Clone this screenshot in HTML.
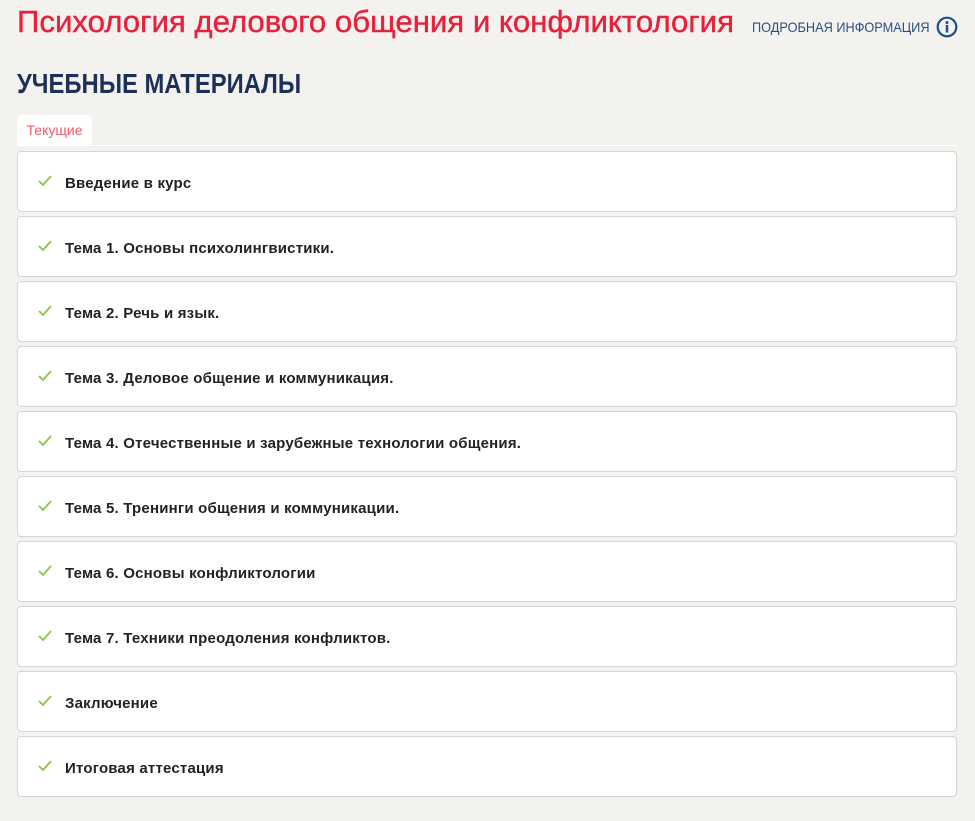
<!DOCTYPE html>
<html><head><meta charset="utf-8"><style>
body{margin:0;background:#f3f2ef;width:975px;height:821px;overflow:hidden;font-family:"Liberation Sans",sans-serif;}
.title{position:absolute;left:17px;top:4px;font-size:31px;color:#e8203c;white-space:nowrap;transform:scaleX(1.005);transform-origin:left;-webkit-text-stroke:0.4px #e8203c}
.info{position:absolute;left:752px;top:19px;font-size:14px;color:#2a5080;white-space:nowrap;transform:scaleX(0.91);transform-origin:left}
.icon{position:absolute;left:936px;top:16px}
.h2{position:absolute;left:17px;top:68px;font-weight:bold;font-size:28px;color:#1c3058;white-space:nowrap;transform:scaleX(0.85);transform-origin:left}
.tab{position:absolute;left:17px;top:115px;width:75px;height:31px;background:#fff;border-radius:4px 4px 0 0;color:#ef5a6a;font-size:14px;text-align:center;line-height:31px}
.line{position:absolute;left:17px;top:145px;width:940px;height:1px;background:#fff}
.item{position:absolute;left:17px;width:938px;height:59px;background:#fff;border:1px solid #d4d4d4;border-radius:4px;}
.item svg{position:absolute;left:20px;top:23px}
.item span{position:absolute;left:47px;top:23px;font-size:15px;color:#222;font-weight:bold;white-space:nowrap;letter-spacing:0.2px}
</style></head><body>
<div class="title">Психология делового общения и конфликтология</div>
<div class="info">ПОДРОБНАЯ ИНФОРМАЦИЯ</div>
<svg class="icon" width="22" height="22" viewBox="0 0 22 22"><circle cx="11" cy="11" r="9.3" fill="none" stroke="#1b4f8a" stroke-width="2.2"/><circle cx="11" cy="6.5" r="1.5" fill="#1b4f8a"/><rect x="9.8" y="9" width="2.4" height="7.5" fill="#1b4f8a"/></svg>
<div class="h2">УЧЕБНЫЕ МАТЕРИАЛЫ</div>
<div class="tab">Текущие</div>
<div class="line"></div>
<div class="item" style="top:151px"><svg width="14" height="11"><path d="M1 6l4 4 8-9" fill="none" stroke="#8cc63f" stroke-width="1.8"/></svg><span>Введение в курс</span></div>
<div class="item" style="top:216px"><svg width="14" height="11"><path d="M1 6l4 4 8-9" fill="none" stroke="#8cc63f" stroke-width="1.8"/></svg><span>Тема 1. Основы психолингвистики.</span></div>
<div class="item" style="top:281px"><svg width="14" height="11"><path d="M1 6l4 4 8-9" fill="none" stroke="#8cc63f" stroke-width="1.8"/></svg><span>Тема 2. Речь и язык.</span></div>
<div class="item" style="top:346px"><svg width="14" height="11"><path d="M1 6l4 4 8-9" fill="none" stroke="#8cc63f" stroke-width="1.8"/></svg><span>Тема 3. Деловое общение и коммуникация.</span></div>
<div class="item" style="top:411px"><svg width="14" height="11"><path d="M1 6l4 4 8-9" fill="none" stroke="#8cc63f" stroke-width="1.8"/></svg><span>Тема 4. Отечественные и зарубежные технологии общения.</span></div>
<div class="item" style="top:476px"><svg width="14" height="11"><path d="M1 6l4 4 8-9" fill="none" stroke="#8cc63f" stroke-width="1.8"/></svg><span>Тема 5. Тренинги общения и коммуникации.</span></div>
<div class="item" style="top:541px"><svg width="14" height="11"><path d="M1 6l4 4 8-9" fill="none" stroke="#8cc63f" stroke-width="1.8"/></svg><span>Тема 6. Основы конфликтологии</span></div>
<div class="item" style="top:606px"><svg width="14" height="11"><path d="M1 6l4 4 8-9" fill="none" stroke="#8cc63f" stroke-width="1.8"/></svg><span>Тема 7. Техники преодоления конфликтов.</span></div>
<div class="item" style="top:671px"><svg width="14" height="11"><path d="M1 6l4 4 8-9" fill="none" stroke="#8cc63f" stroke-width="1.8"/></svg><span>Заключение</span></div>
<div class="item" style="top:736px"><svg width="14" height="11"><path d="M1 6l4 4 8-9" fill="none" stroke="#8cc63f" stroke-width="1.8"/></svg><span>Итоговая аттестация</span></div>
</body></html>
